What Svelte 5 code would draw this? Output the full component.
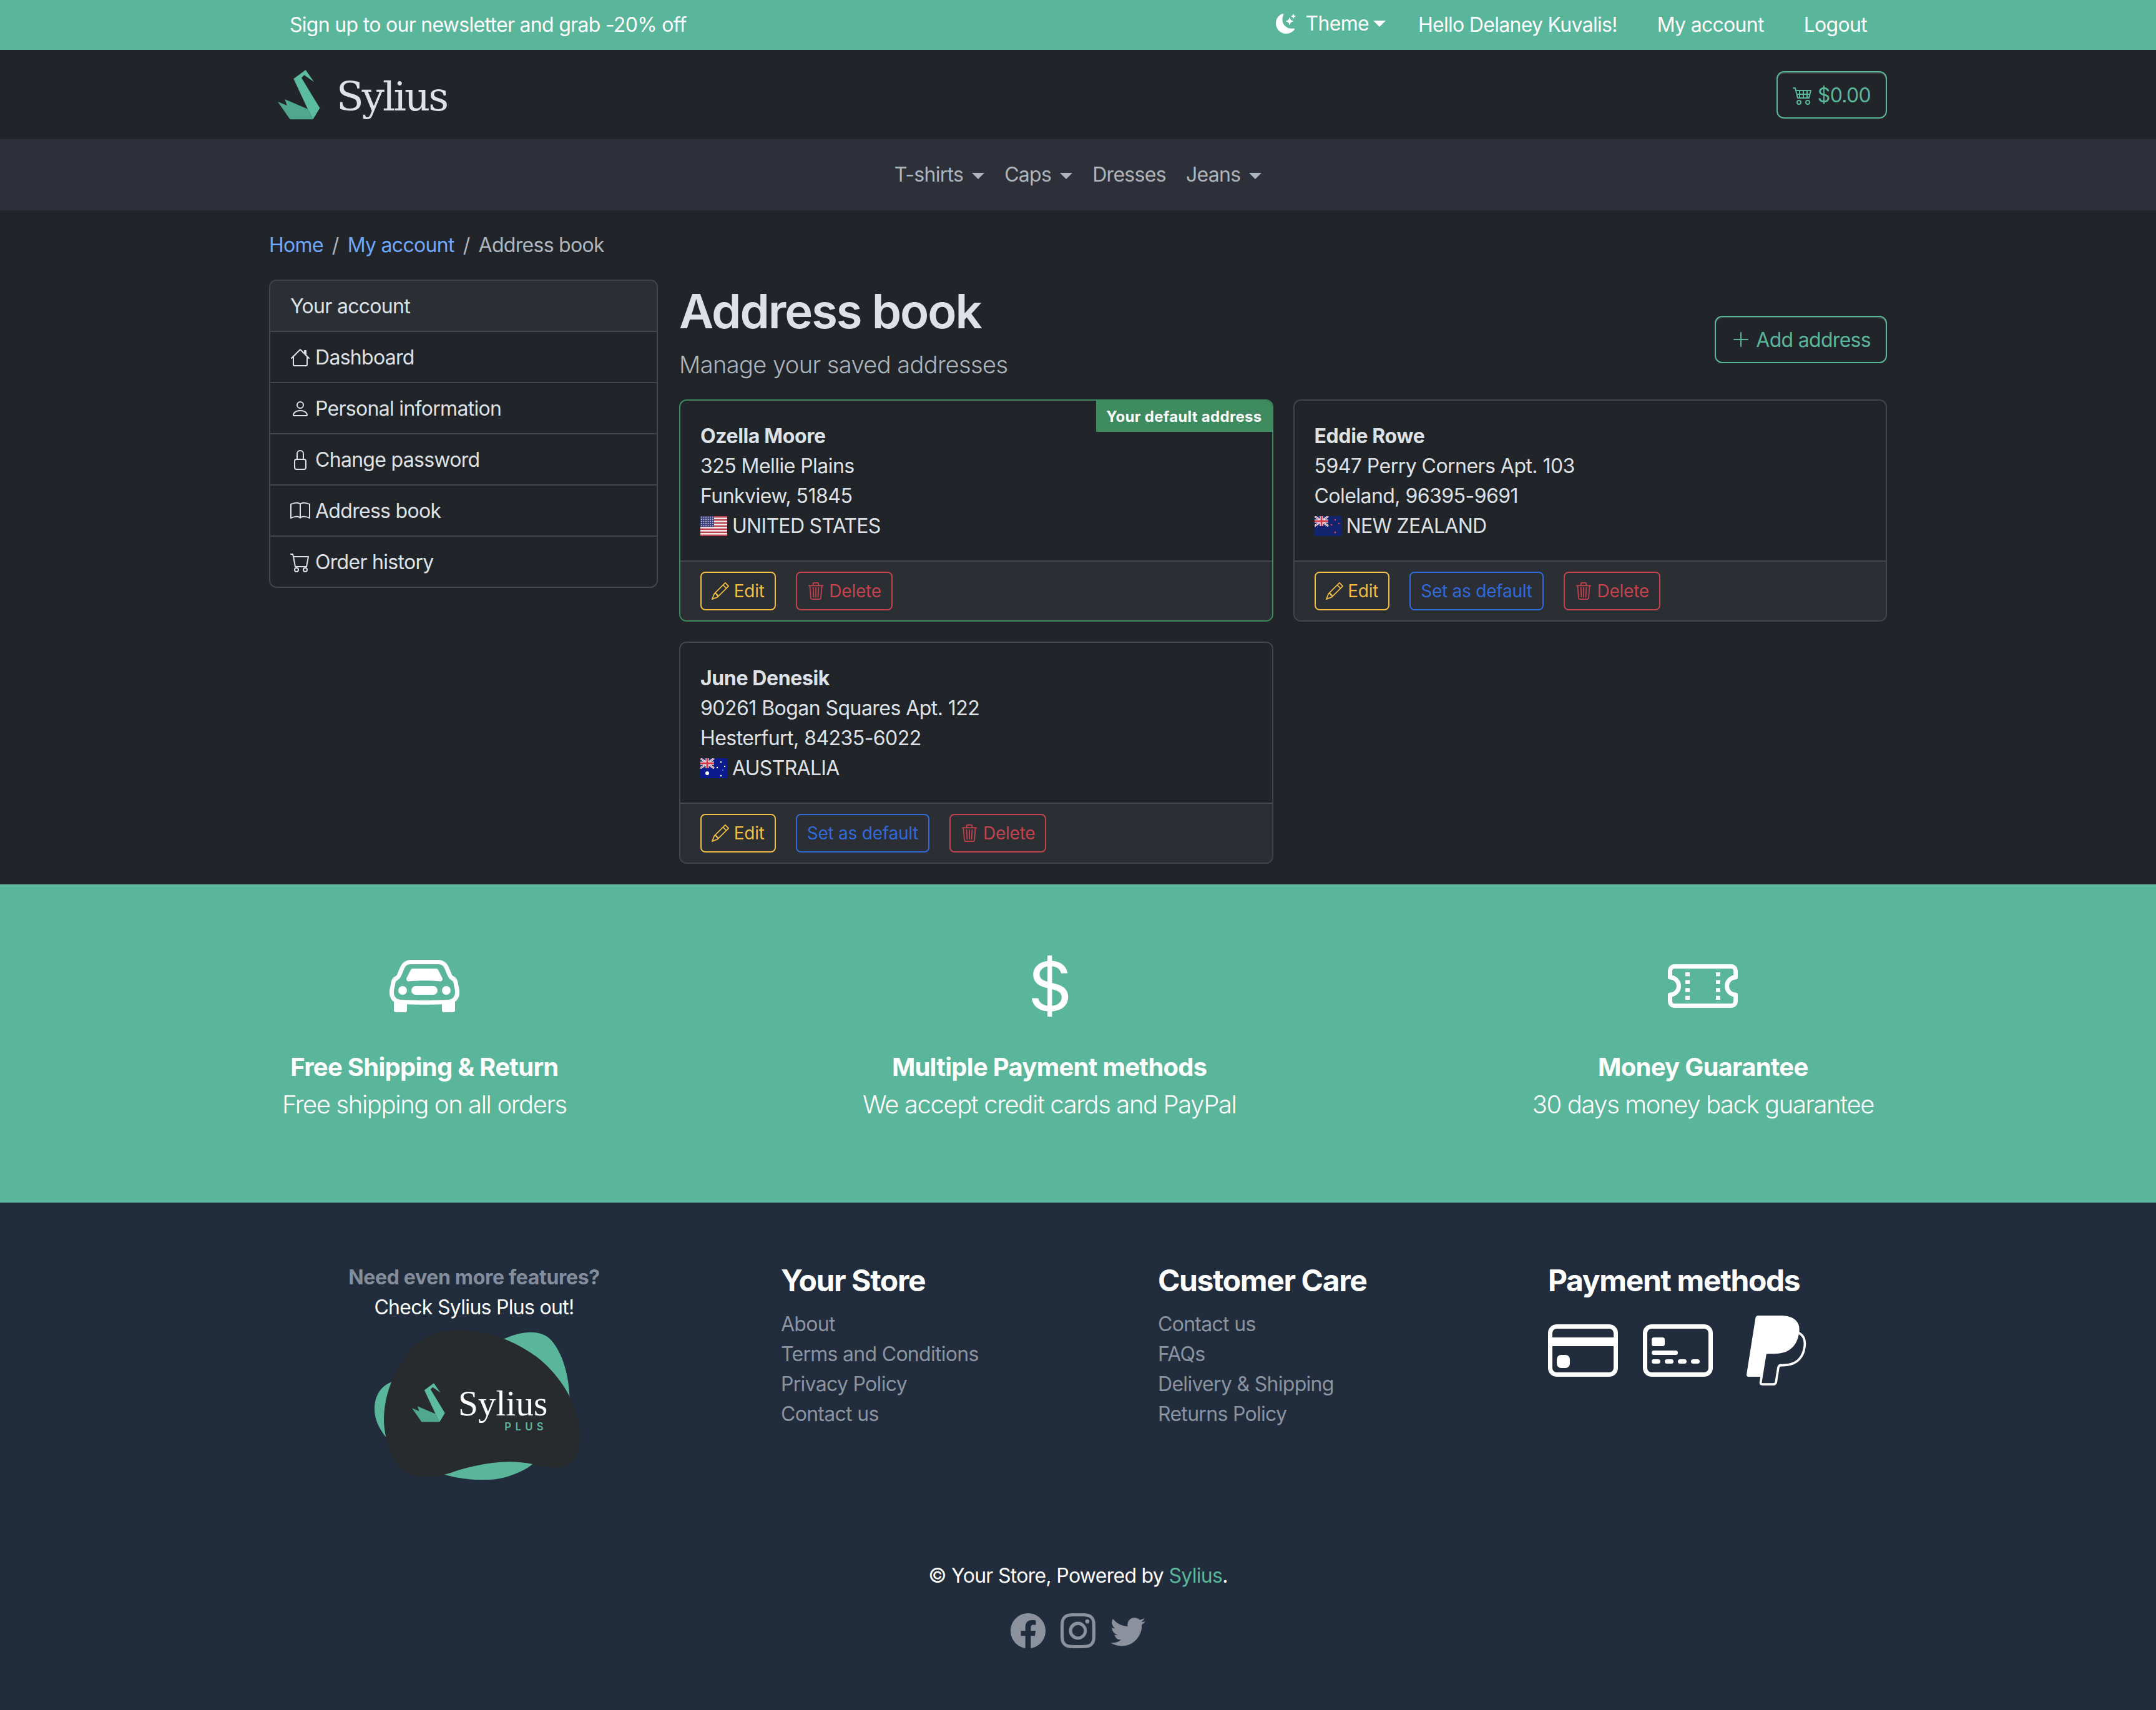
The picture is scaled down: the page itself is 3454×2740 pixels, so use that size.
<script>
  const icons = {
    moon: ["M6 .278a.768.768 0 0 1 .08.858 7.208 7.208 0 0 0-.878 3.46c0 4.021 3.278 7.277 7.318 7.277.527 0 1.04-.055 1.533-.16a.787.787 0 0 1 .81.316.733.733 0 0 1-.031.893A8.349 8.349 0 0 1 8.344 16C3.734 16 0 12.286 0 7.71 0 4.266 2.114 1.312 5.124.06A.752.752 0 0 1 6 .278z", "M10.794 3.148a.217.217 0 0 1 .412 0l.387 1.162c.173.518.579.924 1.097 1.097l1.162.387a.217.217 0 0 1 0 .412l-1.162.387a1.734 1.734 0 0 0-1.097 1.097l-.387 1.162a.217.217 0 0 1-.412 0l-.387-1.162A1.734 1.734 0 0 0 9.31 6.593l-1.162-.387a.217.217 0 0 1 0-.412l1.162-.387a1.734 1.734 0 0 0 1.097-1.097l.387-1.162zM13.863.099a.145.145 0 0 1 .274 0l.258.774c.115.346.386.617.732.732l.774.258a.145.145 0 0 1 0 .274l-.774.258a1.156 1.156 0 0 0-.732.732l-.258.774a.145.145 0 0 1-.274 0l-.258-.774a1.156 1.156 0 0 0-.732-.732l-.774-.258a.145.145 0 0 1 0-.274l.774-.258c.346-.115.617-.386.732-.732L13.863.1z"],
    cart4: ["M0 2.5A.5.5 0 0 1 .5 2H2a.5.5 0 0 1 .485.379L2.89 4H14.5a.5.5 0 0 1 .485.621l-1.5 6A.5.5 0 0 1 13 11H4a.5.5 0 0 1-.485-.379L1.61 3H.5a.5.5 0 0 1-.5-.5zM3.14 5l.5 2H5V5H3.14zM6 5v2h2V5H6zm3 0v2h2V5H9zm3 0v2h1.36l.5-2H12zm1.11 3H12v2h.61l.5-2zM11 8H9v2h2V8zM8 8H6v2h2V8zM5 8H3.89l.5 2H5V8zm0 5a1 1 0 1 0 0 2 1 1 0 0 0 0-2zm-2 1a2 2 0 1 1 4 0 2 2 0 0 1-4 0zm9-1a1 1 0 1 0 0 2 1 1 0 0 0 0-2zm-2 1a2 2 0 1 1 4 0 2 2 0 0 1-4 0z"],
    house: ["M8.707 1.5a1 1 0 0 0-1.414 0L.646 8.146a.5.5 0 0 0 .708.708L2 8.207V13.5A1.5 1.5 0 0 0 3.5 15h9a1.5 1.5 0 0 0 1.5-1.5V8.207l.646.647a.5.5 0 0 0 .708-.708L13 5.793V2.5a.5.5 0 0 0-.5-.5h-1a.5.5 0 0 0-.5.5v1.293L8.707 1.5ZM13 7.207V13.5a.5.5 0 0 1-.5.5h-9a.5.5 0 0 1-.5-.5V7.207l5-5 5 5Z"],
    person: ["M8 8a3 3 0 1 0 0-6 3 3 0 0 0 0 6Zm2-3a2 2 0 1 1-4 0 2 2 0 0 1 4 0Zm4 8c0 1-1 1-1 1H3s-1 0-1-1 1-4 6-4 6 3 6 4Zm-1-.004c-.001-.246-.154-.986-.832-1.664C11.516 10.68 10.289 10 8 10c-2.29 0-3.516.68-4.168 1.332-.678.678-.83 1.418-.832 1.664h10Z"],
    lock: ["M8 1a2 2 0 0 1 2 2v4H6V3a2 2 0 0 1 2-2zm3 6V3a3 3 0 0 0-6 0v4a2 2 0 0 0-2 2v5a2 2 0 0 0 2 2h6a2 2 0 0 0 2-2V9a2 2 0 0 0-2-2zM5 8h6a1 1 0 0 1 1 1v5a1 1 0 0 1-1 1H5a1 1 0 0 1-1-1V9a1 1 0 0 1 1-1z"],
    book: ["M1 2.828c.885-.37 2.154-.769 3.388-.893 1.33-.134 2.458.063 3.112.752v9.746c-.935-.53-2.12-.603-3.213-.493-1.18.12-2.37.461-3.287.811V2.828zm7.5-.141c.654-.689 1.782-.886 3.112-.752 1.234.124 2.503.523 3.388.893v9.923c-.918-.35-2.107-.692-3.287-.81-1.094-.111-2.278-.039-3.213.492V2.687zM8 1.783C7.015.936 5.587.81 4.287.94c-1.514.153-3.042.672-3.994 1.105A.5.5 0 0 0 0 2.5v11a.5.5 0 0 0 .707.455c.882-.4 2.303-.881 3.68-1.02 1.409-.142 2.59.087 3.223.877a.5.5 0 0 0 .78 0c.633-.79 1.814-1.019 3.222-.877 1.378.139 2.8.62 3.681 1.02A.5.5 0 0 0 16 13.5v-11a.5.5 0 0 0-.293-.455c-.952-.433-2.48-.952-3.994-1.105C10.413.809 8.985.936 8 1.783z"],
    cart: ["M0 1.5A.5.5 0 0 1 .5 1H2a.5.5 0 0 1 .485.379L2.89 3H14.5a.5.5 0 0 1 .491.592l-1.5 8A.5.5 0 0 1 13 12H4a.5.5 0 0 1-.491-.408L2.01 3.607 1.61 2H.5a.5.5 0 0 1-.5-.5zM3.102 4l1.313 7h8.17l1.313-7H3.102zM5 12a2 2 0 1 0 0 4 2 2 0 0 0 0-4zm7 0a2 2 0 1 0 0 4 2 2 0 0 0 0-4zm-7 1a1 1 0 1 1 0 2 1 1 0 0 1 0-2zm7 0a1 1 0 1 1 0 2 1 1 0 0 1 0-2z"],
    pencil: ["M12.146.146a.5.5 0 0 1 .708 0l3 3a.5.5 0 0 1 0 .708l-10 10a.5.5 0 0 1-.168.11l-5 2a.5.5 0 0 1-.65-.65l2-5a.5.5 0 0 1 .11-.168l10-10zM11.207 2.5 13.5 4.793 14.793 3.5 12.5 1.207 11.207 2.5zm1.586 3L10.5 3.207 4 9.707V10h.5a.5.5 0 0 1 .5.5v.5h.5a.5.5 0 0 1 .5.5v.5h.293l6.5-6.5zm-9.761 5.175-.106.106-1.528 3.821 3.821-1.528.106-.106A.5.5 0 0 1 5 12.5V12h-.5a.5.5 0 0 1-.5-.5V11h-.5a.5.5 0 0 1-.468-.325z"],
    trash: ["M6.5 1h3a.5.5 0 0 1 .5.5v1H6v-1a.5.5 0 0 1 .5-.5ZM11 2.5v-1A1.5 1.5 0 0 0 9.5 0h-3A1.5 1.5 0 0 0 5 1.5v1H2.506a.58.58 0 0 0-.01 0H1.5a.5.5 0 0 0 0 1h.538l.853 10.66A2 2 0 0 0 4.885 16h6.23a2 2 0 0 0 1.994-1.84l.853-10.66h.538a.5.5 0 0 0 0-1h-.995a.59.59 0 0 0-.01 0H11Zm1.958 1-.846 10.58a1 1 0 0 1-.997.92h-6.23a1 1 0 0 1-.997-.92L3.042 3.5h9.916Zm-7.487 1a.5.5 0 0 1 .528.47l.5 8.5a.5.5 0 0 1-.998.06L5 5.03a.5.5 0 0 1 .47-.53Zm5.058 0a.5.5 0 0 1 .47.53l-.5 8.5a.5.5 0 1 1-.998-.06l.5-8.5a.5.5 0 0 1 .528-.47ZM8 4.5a.5.5 0 0 1 .5.5v8.5a.5.5 0 0 1-1 0V5a.5.5 0 0 1 .5-.5Z"],
    plus: ["M8 2a.5.5 0 0 1 .5.5v5h5a.5.5 0 0 1 0 1h-5v5a.5.5 0 0 1-1 0v-5h-5a.5.5 0 0 1 0-1h5v-5A.5.5 0 0 1 8 2Z"],
    car: ["M4 9a1 1 0 1 1-2 0 1 1 0 0 1 2 0Zm10 0a1 1 0 1 1-2 0 1 1 0 0 1 2 0ZM6 8a1 1 0 0 0 0 2h4a1 1 0 1 0 0-2H6ZM4.862 4.276 3.906 6.19a.51.51 0 0 0 .497.731c.91-.073 2.35-.17 3.597-.17 1.247 0 2.688.097 3.597.17a.51.51 0 0 0 .497-.731l-.956-1.913A.5.5 0 0 0 10.691 4H5.309a.5.5 0 0 0-.447.276Z", "M2.52 3.515A2.5 2.5 0 0 1 4.82 2h6.362c1 0 1.904.596 2.298 1.515l.792 1.848c.075.175.21.319.38.404.5.25.855.715.965 1.262l.335 1.679c.033.161.049.325.049.49v.413c0 .814-.39 1.543-1 1.997V13.5a.5.5 0 0 1-.5.5h-2a.5.5 0 0 1-.5-.5v-1.338c-1.292.048-2.745.088-4 .088s-2.708-.04-4-.088V13.5a.5.5 0 0 1-.5.5h-2a.5.5 0 0 1-.5-.5v-1.892c-.61-.454-1-1.183-1-1.997v-.413a2.5 2.5 0 0 1 .049-.49l.335-1.68c.11-.546.465-1.012.964-1.261a.807.807 0 0 0 .381-.404l.792-1.848ZM4.82 3a1.5 1.5 0 0 0-1.379.91l-.792 1.847a1.8 1.8 0 0 1-.853.904.807.807 0 0 0-.43.564L1.03 8.904a1.5 1.5 0 0 0-.03.294v.413c0 .796.62 1.448 1.408 1.484 1.555.07 3.786.155 5.592.155 1.806 0 4.037-.084 5.592-.155A1.479 1.479 0 0 0 15 9.611v-.413c0-.099-.01-.197-.03-.294l-.335-1.68a.807.807 0 0 0-.43-.563 1.807 1.807 0 0 1-.853-.904l-.792-1.848A1.5 1.5 0 0 0 11.18 3H4.82Z"],
    dollar: ["M4 10.781c.148 1.667 1.513 2.85 3.591 3.003V15h1.043v-1.216c2.27-.179 3.678-1.438 3.678-3.3 0-1.59-.947-2.51-2.956-3.028l-.722-.187V3.467c1.122.11 1.879.714 2.07 1.616h1.47c-.166-1.6-1.54-2.748-3.54-2.875V1H7.591v1.233c-1.939.23-3.27 1.472-3.27 3.156 0 1.454.966 2.483 2.661 2.917l.61.162v4.031c-1.149-.17-1.94-.8-2.131-1.718H4zm3.391-3.836c-1.043-.263-1.6-.825-1.6-1.616 0-.944.704-1.641 1.8-1.828v3.495l-.2-.05zm1.591 1.872c1.287.323 1.852.859 1.852 1.769 0 1.097-.826 1.828-2.2 1.939V8.73l.348.086z"],
    ticket: ["M4 4.85v.9h1v-.9H4Zm7 0v.9h1v-.9h-1Zm-7 1.8v.9h1v-.9H4Zm7 0v.9h1v-.9h-1Zm-7 1.8v.9h1v-.9H4Zm7 0v.9h1v-.9h-1Zm-7 1.8v.9h1v-.9H4Zm7 0v.9h1v-.9h-1Z", "M1.5 3A1.5 1.5 0 0 0 0 4.5V6a.5.5 0 0 0 .5.5 1.5 1.5 0 1 1 0 3 .5.5 0 0 0-.5.5v1.5A1.5 1.5 0 0 0 1.5 13h13a1.5 1.5 0 0 0 1.5-1.5V10a.5.5 0 0 0-.5-.5 1.5 1.5 0 0 1 0-3A.5.5 0 0 0 16 6V4.5A1.5 1.5 0 0 0 14.5 3h-13ZM1 4.5a.5.5 0 0 1 .5-.5h13a.5.5 0 0 1 .5.5v1.05a2.5 2.5 0 0 0 0 4.9v1.05a.5.5 0 0 1-.5.5h-13a.5.5 0 0 1-.5-.5v-1.05a2.5 2.5 0 0 0 0-4.9V4.5Z"],
    card: ["M0 4a2 2 0 0 1 2-2h12a2 2 0 0 1 2 2v8a2 2 0 0 1-2 2H2a2 2 0 0 1-2-2V4zm2-1a1 1 0 0 0-1 1v1h14V4a1 1 0 0 0-1-1H2zm13 4H1v5a1 1 0 0 0 1 1h12a1 1 0 0 0 1-1V7z", "M2 10a1 1 0 0 1 1-1h1a1 1 0 0 1 1 1v1a1 1 0 0 1-1 1H3a1 1 0 0 1-1-1v-1z"],
    cardFront: ["M14 3a1 1 0 0 1 1 1v8a1 1 0 0 1-1 1H2a1 1 0 0 1-1-1V4a1 1 0 0 1 1-1h12zM2 2a2 2 0 0 0-2 2v8a2 2 0 0 0 2 2h12a2 2 0 0 0 2-2V4a2 2 0 0 0-2-2H2z", "M2 5.5a.5.5 0 0 1 .5-.5h2a.5.5 0 0 1 .5.5v1a.5.5 0 0 1-.5.5h-2a.5.5 0 0 1-.5-.5v-1zm0 3a.5.5 0 0 1 .5-.5h5a.5.5 0 0 1 0 1h-5a.5.5 0 0 1-.5-.5zm0 2a.5.5 0 0 1 .5-.5h1a.5.5 0 0 1 0 1h-1a.5.5 0 0 1-.5-.5zm3 0a.5.5 0 0 1 .5-.5h1a.5.5 0 0 1 0 1h-1a.5.5 0 0 1-.5-.5zm3 0a.5.5 0 0 1 .5-.5h1a.5.5 0 0 1 0 1h-1a.5.5 0 0 1-.5-.5zm3 0a.5.5 0 0 1 .5-.5h1a.5.5 0 0 1 0 1h-1a.5.5 0 0 1-.5-.5z"],
    paypal: ["M14.06 3.713c.12-1.071-.093-1.832-.702-2.526C12.628.356 11.312 0 9.626 0H4.734a.7.7 0 0 0-.691.59L2.005 13.509a.42.42 0 0 0 .415.486h2.756l-.202 1.28a.628.628 0 0 0 .62.726H8.14c.429 0 .793-.31.862-.731l.025-.13.48-3.043.03-.164.001-.007a.351.351 0 0 1 .348-.297h.38c1.266 0 2.425-.256 3.345-.91.379-.27.712-.603.993-1.005a4.942 4.942 0 0 0 .88-2.195c.242-1.246.13-2.356-.57-3.154a2.687 2.687 0 0 0-.76-.59l-.094-.061ZM6.543 8.82a.695.695 0 0 1 .321-.079H8.3c2.82 0 5.027-1.144 5.672-4.456l.003-.016c.217.124.4.27.548.438.546.623.679 1.535.45 2.71-.272 1.397-.866 2.307-1.663 2.874-.802.57-1.842.815-3.043.815h-.38a.873.873 0 0 0-.863.734l-.03.164-.48 3.043-.024.13-.001.004a.352.352 0 0 1-.348.296H5.595a.106.106 0 0 1-.105-.123l.208-1.32.845-5.214Z"],
    facebook: ["M16 8.049c0-4.446-3.582-8.05-8-8.05C3.58 0-.002 3.603-.002 8.05c0 4.017 2.926 7.347 6.75 7.951v-5.625h-2.03V8.05H6.75V6.275c0-2.017 1.195-3.131 3.022-3.131.876 0 1.791.157 1.791.157v1.98h-1.009c-.993 0-1.303.621-1.303 1.258v1.51h2.218l-.354 2.326H9.25V16c3.824-.604 6.75-3.934 6.75-7.951z"],
    instagram: ["M8 0C5.829 0 5.556.01 4.703.048 3.85.088 3.269.222 2.76.42a3.917 3.917 0 0 0-1.417.923A3.927 3.927 0 0 0 .42 2.76C.222 3.268.087 3.85.048 4.7.01 5.555 0 5.827 0 8.001c0 2.172.01 2.444.048 3.297.04.852.174 1.433.372 1.942.205.526.478.972.923 1.417.444.445.89.719 1.416.923.51.198 1.09.333 1.942.372C5.555 15.99 5.827 16 8 16s2.444-.01 3.298-.048c.851-.04 1.434-.174 1.943-.372a3.916 3.916 0 0 0 1.416-.923c.445-.445.718-.891.923-1.417.197-.509.332-1.09.372-1.942C15.99 10.445 16 10.173 16 8s-.01-2.445-.048-3.299c-.04-.851-.175-1.433-.372-1.941a3.926 3.926 0 0 0-.923-1.417A3.911 3.911 0 0 0 13.24.42c-.51-.198-1.092-.333-1.943-.372C10.443.01 10.172 0 7.998 0h.003zm-.717 1.442h.718c2.136 0 2.389.007 3.232.046.78.035 1.204.166 1.486.275.373.145.64.319.92.599.28.28.453.546.598.92.11.281.24.705.275 1.485.039.843.047 1.096.047 3.231s-.008 2.389-.047 3.232c-.035.78-.166 1.203-.275 1.485a2.47 2.47 0 0 1-.599.919c-.28.28-.546.453-.92.598-.28.11-.704.24-1.485.276-.843.038-1.096.047-3.232.047s-2.39-.009-3.233-.047c-.78-.036-1.203-.166-1.485-.276a2.478 2.478 0 0 1-.92-.598 2.48 2.48 0 0 1-.6-.92c-.109-.281-.24-.705-.275-1.485-.038-.843-.046-1.096-.046-3.233 0-2.136.008-2.388.046-3.231.036-.78.166-1.204.276-1.486.145-.373.319-.64.599-.92.28-.28.546-.453.92-.598.282-.11.705-.24 1.485-.276.738-.034 1.024-.044 2.515-.045v.002zm4.988 1.328a.96.96 0 1 0 0 1.92.96.96 0 0 0 0-1.92zm-4.27 1.122a4.109 4.109 0 1 0 0 8.217 4.109 4.109 0 0 0 0-8.217zm0 1.441a2.667 2.667 0 1 1 0 5.334 2.667 2.667 0 0 1 0-5.334z"],
    twitter: ["M5.026 15c6.038 0 9.341-5.003 9.341-9.334 0-.14 0-.282-.006-.422A6.685 6.685 0 0 0 16 3.542a6.658 6.658 0 0 1-1.889.518 3.301 3.301 0 0 0 1.447-1.817 6.533 6.533 0 0 1-2.087.793A3.286 3.286 0 0 0 7.875 6.03a9.325 9.325 0 0 1-6.767-3.429 3.289 3.289 0 0 0 1.018 4.382A3.323 3.323 0 0 1 .64 6.575v.045a3.288 3.288 0 0 0 2.632 3.218 3.203 3.203 0 0 1-.865.115 3.23 3.23 0 0 1-.614-.057 3.283 3.283 0 0 0 3.067 2.277A6.588 6.588 0 0 1 .78 13.58a6.32 6.32 0 0 1-.78-.045A9.344 9.344 0 0 0 5.026 15z"]
  };

  const menu = [
    { label: "T-shirts", caret: true },
    { label: "Caps", caret: true },
    { label: "Dresses", caret: false },
    { label: "Jeans", caret: true }
  ];

  const accountLinks = [
    { label: "Dashboard", icon: "house" },
    { label: "Personal information", icon: "person" },
    { label: "Change password", icon: "lock" },
    { label: "Address book", icon: "book" },
    { label: "Order history", icon: "cart" }
  ];

  const addresses = [
    { name: "Ozella Moore", street: "325 Mellie Plains", city: "Funkview, 51845", country: "UNITED STATES", flag: "us", isDefault: true },
    { name: "Eddie Rowe", street: "5947 Perry Corners Apt. 103", city: "Coleland, 96395-9691", country: "NEW ZEALAND", flag: "nz", isDefault: false },
    { name: "June Denesik", street: "90261 Bogan Squares Apt. 122", city: "Hesterfurt, 84235-6022", country: "AUSTRALIA", flag: "au", isDefault: false }
  ];

  const perks = [
    { icon: "car", title: "Free Shipping & Return", text: "Free shipping on all orders" },
    { icon: "dollar", title: "Multiple Payment methods", text: "We accept credit cards and PayPal" },
    { icon: "ticket", title: "Money Guarantee", text: "30 days money back guarantee" }
  ];

  const footerCols = [
    { title: "Your Store", links: ["About", "Terms and Conditions", "Privacy Policy", "Contact us"] },
    { title: "Customer Care", links: ["Contact us", "FAQs", "Delivery & Shipping", "Returns Policy"] }
  ];

  const usStripes = [0, 1, 2, 3, 4, 5, 6];
</script>

{#snippet icon(name, size)}
  <svg class="icon" width={size} height={size} viewBox="0 0 16 16" fill="currentColor">
    {#each icons[name] as d}
      <path {d} fill-rule="evenodd" />
    {/each}
  </svg>
{/snippet}

{#snippet swanShapes()}
  <polygon fill="#5cbd9e" points="152,140 210,97 250,155 203,122 190,135 278,280 245,335 220,285" />
  <polygon fill="#4fa88b" points="76,250 120,268 110,238 220,285 245,335 135,335" />
{/snippet}

{#snippet union()}
  <rect width="22" height="16" fill="#1b2d7a" />
  <path d="M0 0 22 16M22 0 0 16" stroke="#fff" stroke-width="3" />
  <path d="M0 0 22 16M22 0 0 16" stroke="#d03a4a" stroke-width="1" />
  <path d="M11 0V16M0 8H22" stroke="#fff" stroke-width="5" />
  <path d="M11 0V16M0 8H22" stroke="#d03a4a" stroke-width="3" />
{/snippet}

{#snippet flag(code)}
  <svg class="flag" width="43" height="32" viewBox="0 0 43 32">
    {#if code === "us"}
      <rect width="43" height="32" fill="#f4f0f0" />
      {#each usStripes as i}
        <rect y={i * 4.92} width="43" height="2.46" fill="#b8404f" />
      {/each}
      <rect width="22" height="17.2" fill="#3c3f7c" />
      <rect width="22" height="17.2" fill="url(#us-stars)" />
      <defs>
        <pattern id="us-stars" width="3.6" height="3.4" patternUnits="userSpaceOnUse">
          <circle cx="1.8" cy="1.7" r="0.9" fill="#e6e6f0" />
        </pattern>
      </defs>
    {:else if code === "nz"}
      <rect width="43" height="32" fill="#13246e" />
      {@render union()}
      <g fill="#d8404f">
        <circle cx="33" cy="6" r="1.3" /><circle cx="33" cy="26" r="1.5" />
        <circle cx="27" cy="14" r="1.3" /><circle cx="39" cy="12" r="1.3" />
      </g>
    {:else}
      <rect width="43" height="32" fill="#0b1a8c" />
      {@render union()}
      <g fill="#fff">
        <circle cx="11" cy="24" r="3" /><circle cx="33" cy="6" r="1.2" /><circle cx="33" cy="28" r="1.3" />
        <circle cx="27" cy="15" r="1.2" /><circle cx="39" cy="13" r="1.2" /><circle cx="36" cy="19" r="0.7" />
      </g>
    {/if}
  </svg>
{/snippet}

<div class="page">
  <div class="topbar">
    <div class="wrap topbar-row">
      <span>Sign up to our newsletter and grab -20% off</span>
      <div class="topbar-links">
        <span class="theme">{@render icon("moon", 32)}<span>Theme</span><i class="caret tight"></i></span>
        <span>Hello Delaney Kuvalis!</span>
        <span>My account</span>
        <span>Logout</span>
      </div>
    </div>
  </div>

  <header class="wrap brand-row">
    <div class="logo">
      <svg width="68" height="80" viewBox="76 97 204 240">{@render swanShapes()}</svg>
      <span class="logo-text">Sylius</span>
    </div>
    <button class="btn btn-green">{@render icon("cart4", 32)} $0.00</button>
  </header>

  <nav class="menu">
    {#each menu as item}
      <span class="menu-item">{item.label}{#if item.caret}<i class="caret"></i>{/if}</span>
    {/each}
  </nav>

  <main class="wrap">
    <ol class="crumbs">
      <li><a href="#home">Home</a></li>
      <li class="sep">/</li>
      <li><a href="#account">My account</a></li>
      <li class="sep">/</li>
      <li>Address book</li>
    </ol>

    <div class="layout">
      <aside class="side">
        <div class="side-row side-title">Your account</div>
        {#each accountLinks as link}
          <div class="side-row">{@render icon(link.icon, 32)} {link.label}</div>
        {/each}
      </aside>

      <section class="content">
        <div class="content-head">
          <div class="head-text">
            <h1>Address book</h1>
            <p class="lead">Manage your saved addresses</p>
          </div>
          <button class="btn btn-green">{@render icon("plus", 32)} Add address</button>
        </div>

        <div class="cards">
          {#each addresses as a}
            <article class="card" class:default={a.isDefault}>
              {#if a.isDefault}<span class="badge">Your default address</span>{/if}
              <div class="card-body">
                <strong>{a.name}</strong>
                <div>{a.street}</div>
                <div>{a.city}</div>
                <div class="country">{@render flag(a.flag)} {a.country}</div>
              </div>
              <div class="card-foot">
                <button class="btn-sm yellow">{@render icon("pencil", 28)} Edit</button>
                {#if !a.isDefault}<button class="btn-sm blue">Set as default</button>{/if}
                <button class="btn-sm red">{@render icon("trash", 28)} Delete</button>
              </div>
            </article>
          {/each}
        </div>
      </section>
    </div>
  </main>

  <section class="perks">
    <div class="wrap perks-row">
      {#each perks as p}
        <div class="perk">
          {@render icon(p.icon, 112)}
          <h3>{p.title}</h3>
          <p>{p.text}</p>
        </div>
      {/each}
    </div>
  </section>

  <footer class="footer">
    <div class="wrap footer-grid">
      <div class="plus">
        <div class="plus-need">Need even more features?</div>
        <div>Check Sylius Plus out!</div>
        <svg class="plus-logo" width="330" height="240" viewBox="240 390 990 720">
          <path fill="#5ab69a" d="M310 645C260 670 240 720 240 770C240 820 265 870 295 905L575 1085C660 1110 780 1120 860 1100C920 1085 970 1060 1000 1035L1178 720C1175 620 1150 510 1090 440C1040 385 950 395 870 430Z" />
          <path fill="#282b2e" d="M640 390C760 390 900 430 1020 520C1110 590 1180 690 1210 790C1240 880 1240 1000 1170 1040C1110 1060 1050 1050 1000 1035C880 1010 760 1030 640 1065C540 1105 420 1110 370 1060C320 1010 290 920 285 830C285 700 330 600 400 500C460 420 550 390 640 390Z" />
          <svg x="420" y="645" width="160" height="190" viewBox="76 97 204 240">{@render swanShapes()}</svg>
          <text x="642" y="800" class="plus-word">Sylius</text>
          <text x="865" y="872" class="plus-tag">PLUS</text>
        </svg>
      </div>

      {#each footerCols as col}
        <div>
          <h4>{col.title}</h4>
          <ul>
            {#each col.links as l}<li>{l}</li>{/each}
          </ul>
        </div>
      {/each}

      <div>
        <h4>Payment methods</h4>
        <div class="pay-icons">
          {@render icon("card", 112)}
          {@render icon("cardFront", 112)}
          {@render icon("paypal", 112)}
        </div>
      </div>
    </div>

    <div class="copy">© Your Store, Powered by <a href="#sylius">Sylius</a>.</div>
    <div class="social">
      {@render icon("facebook", 56)}
      {@render icon("instagram", 56)}
      {@render icon("twitter", 56)}
    </div>
  </footer>
</div>

<style>
  :global(body) {
    margin: 0;
    background: #212529;
  }

  .page {
    font-family: Inter, "Liberation Sans", sans-serif;
    font-size: 32px;
    line-height: 48px;
    letter-spacing: -0.022em;
    color: #dee2e6;
    background: #212529;
  }

  .wrap {
    width: 2592px;
    margin: 0 auto;
  }

  .icon {
    display: inline-block;
    vertical-align: -0.125em;
    flex: none;
  }

  .caret {
    display: inline-block;
    margin-left: 14px;
    vertical-align: 4px;
    border-top: 10px solid currentColor;
    border-left: 10px solid transparent;
    border-right: 10px solid transparent;
  }

  .caret.tight {
    margin-left: -9px;
    vertical-align: 0;
  }

  /* top bar */
  .topbar {
    background: #5ab69a;
    color: #fff;
    height: 80px;
  }

  .topbar-row {
    display: flex;
    justify-content: space-between;
    align-items: center;
    height: 80px;
    box-sizing: border-box;
    padding: 0 32px 0 33px;
  }

  .topbar-links {
    display: flex;
    gap: 64px;
  }

  .theme {
    display: flex;
    align-items: center;
    gap: 16px;
    margin-right: -12px;
    position: relative;
    top: -2px;
  }

  /* brand */
  .brand-row {
    height: 143px;
    display: flex;
    justify-content: space-between;
    align-items: center;
  }

  .logo {
    display: flex;
    align-items: center;
    gap: 26px;
    padding-left: 14px;
  }

  .logo-text {
    font-family: "DejaVu Serif", "Liberation Serif", serif;
    font-size: 64px;
    line-height: 80px;
    letter-spacing: -3px;
    padding-top: 6px;
    color: #dee2e6;
  }

  .btn {
    font: inherit;
    letter-spacing: inherit;
    height: 76px;
    padding: 2px 24px 0;
    border-radius: 12px;
    background: transparent;
    box-shadow: inset 0 2px 0 rgba(255, 255, 255, 0.15);
    cursor: pointer;
  }

  .btn-green {
    color: #5ab69a;
    border: 2px solid #5ab69a;
  }

  /* main menu */
  .menu {
    height: 114px;
    background: #2d3039;
    color: #adb5bd;
    display: flex;
    justify-content: center;
    align-items: center;
    gap: 32px;
  }

  /* breadcrumbs */
  .crumbs {
    list-style: none;
    display: flex;
    gap: 14px;
    margin: 0;
    padding: 32px 0 31px;
    color: #adb5bd;
  }

  .crumbs a {
    color: #6ea8fe;
    text-decoration: none;
  }

  .layout {
    display: flex;
    gap: 34px;
    align-items: flex-start;
  }

  /* sidebar */
  .side {
    width: 623px;
    flex: none;
    box-sizing: border-box;
    border: 2px solid #41464b;
    border-radius: 12px;
    overflow: hidden;
  }

  .side-row {
    padding: 17px 32px 15px;
    border-top: 2px solid #41464b;
    display: flex;
    align-items: center;
    gap: 8px;
  }

  .side-title {
    background: #2b2f33;
    border-top: none;
  }

  /* content */
  .content {
    flex: 1;
    min-width: 0;
  }

  .content-head {
    display: flex;
    justify-content: space-between;
    align-items: center;
    height: 192px;
  }

  .head-text {
    padding-bottom: 22px;
  }

  h1 {
    margin: 0;
    font-size: 76px;
    font-weight: 600;
    line-height: 92px;
    letter-spacing: -0.027em;
    color: #dee2e6;
  }

  .lead {
    margin: 0;
    padding-top: 10px;
    font-size: 38px;
    font-weight: 300;
    line-height: 60px;
    letter-spacing: -0.015em;
    color: #adb5bd;
  }

  .cards {
    display: grid;
    grid-template-columns: 1fr 1fr;
    gap: 32px;
    padding-bottom: 33px;
  }

  .card {
    position: relative;
    border: 2px solid #41464b;
    border-radius: 12px;
    overflow: hidden;
  }

  .card.default {
    border-color: #3d8b5f;
  }

  .badge {
    position: absolute;
    top: 0;
    right: 0;
    padding: 0 16px;
    height: 50px;
    background: #3d8b5f;
    color: #fff;
    font-size: 24px;
    font-weight: 700;
    line-height: 52px;
    letter-spacing: 0.3px;
  }

  .card-body {
    padding: 33px 32px 31px;
    letter-spacing: -0.017em;
  }

  .card-body strong {
    font-weight: 700;
    letter-spacing: -0.012em;
  }

  .country {
    display: flex;
    align-items: center;
    gap: 8px;
    letter-spacing: -0.022em;
  }

  .flag {
    flex: none;
  }

  .card-foot {
    display: flex;
    gap: 32px;
    padding: 16px 32px;
    border-top: 2px solid #41464b;
    background: #2b2f33;
  }

  .btn-sm {
    font: inherit;
    font-size: 28px;
    line-height: 42px;
    letter-spacing: -0.008em;
    padding: 8px 16px;
    background: transparent;
    border: 2px solid currentColor;
    border-radius: 8px;
    cursor: pointer;
  }

  .yellow {
    color: #f0bd45;
  }

  .blue {
    color: #3269d8;
  }

  .red {
    color: #c4424e;
  }

  /* perks band */
  .perks {
    height: 510px;
    box-sizing: border-box;
    padding-top: 107px;
    background: #5ab69a;
    color: #fff;
  }

  .perks-row {
    display: flex;
    justify-content: space-between;
    box-sizing: border-box;
    padding: 0 21px;
  }

  .perk {
    text-align: center;
  }

  .perk h3 {
    margin: 35px 0 0;
    font-size: 40px;
    font-weight: 700;
    line-height: 60px;
    letter-spacing: -0.018em;
  }

  .perk p {
    margin: 0;
    font-size: 40px;
    font-weight: 300;
    line-height: 60px;
    letter-spacing: -1.4px;
  }

  /* footer */
  .footer {
    height: 814px;
    box-sizing: border-box;
    padding-top: 96px;
    background: #212d3d;
    color: #fff;
  }

  .footer-grid {
    display: grid;
    grid-template-columns: 820px 604px 625px 1fr;
    height: 478px;
  }

  .plus {
    width: 657px;
    text-align: center;
  }

  .plus-need {
    font-weight: 700;
    letter-spacing: -0.01em;
    color: #838d9b;
  }

  .plus-logo {
    display: block;
    margin: 12px 0 0 169px;
  }

  .plus-word {
    font-family: "Liberation Serif", serif;
    font-size: 172px;
    letter-spacing: 0;
    fill: #fff;
  }

  .plus-tag {
    font-family: Inter, sans-serif;
    font-size: 50px;
    font-weight: 600;
    letter-spacing: 19px;
    fill: #5ab69a;
  }

  h4 {
    margin: 0 0 17px;
    font-size: 48px;
    font-weight: 700;
    line-height: 58px;
    letter-spacing: -0.029em;
    color: #fff;
  }

  ul {
    list-style: none;
    margin: 0;
    padding: 0;
    color: #8a939f;
  }

  .pay-icons {
    display: flex;
    gap: 40px;
    margin-top: 27px;
  }

  .copy {
    text-align: center;
  }

  .copy a {
    color: #5ab69a;
    text-decoration: none;
  }

  .social {
    display: flex;
    justify-content: center;
    gap: 24px;
    margin-top: 36px;
    color: #8b929d;
  }
</style>
